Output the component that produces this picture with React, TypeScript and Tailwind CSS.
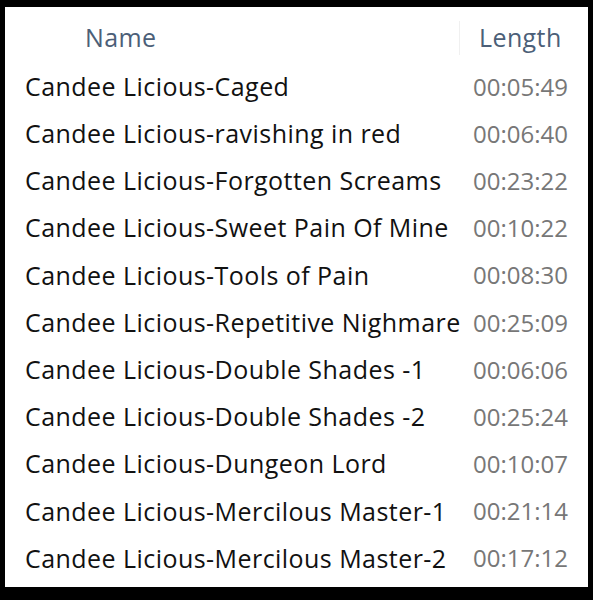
const rows: [string, string][] = [
  ['Candee Licious-Caged', '00:05:49'],
  ['Candee Licious-ravishing in red', '00:06:40'],
  ['Candee Licious-Forgotten Screams', '00:23:22'],
  ['Candee Licious-Sweet Pain Of Mine', '00:10:22'],
  ['Candee Licious-Tools of Pain', '00:08:30'],
  ['Candee Licious-Repetitive Nighmare', '00:25:09'],
  ['Candee Licious-Double Shades -1', '00:06:06'],
  ['Candee Licious-Double Shades -2', '00:25:24'],
  ['Candee Licious-Dungeon Lord', '00:10:07'],
  ['Candee Licious-Mercilous Master-1', '00:21:14'],
  ['Candee Licious-Mercilous Master-2', '00:17:12'],
];

export default function App() {
  return (
    <div className="w-[593px] h-[600px] bg-black pt-[7px] pl-[5px] pr-[5px] pb-[13px]">
      <div className="h-full bg-white flex flex-col font-['Open_Sans',sans-serif]">
        {/* column headers */}
        <div className="flex h-[56px] pt-[6px] text-[25px] tracking-[0.4px] text-[#4c5f78]">
          <div className="w-[455px] flex items-center pl-[80px] border-r border-[#f0f0f0] my-[8px]">Name</div>
          <div className="flex-1 flex items-center pl-[19px]">Length</div>
        </div>
        {rows.map(([name, len]) => (
          <div key={name} className="flex h-[47.2px] items-center">
            <div className="w-[448px] pl-[20px] text-[25px] text-[#111111] whitespace-nowrap tracking-[0.45px]">{name}</div>
            <div className="flex-1 pl-[20px] text-[24px] text-[#777777]">{len}</div>
          </div>
        ))}
      </div>
    </div>
  );
}
